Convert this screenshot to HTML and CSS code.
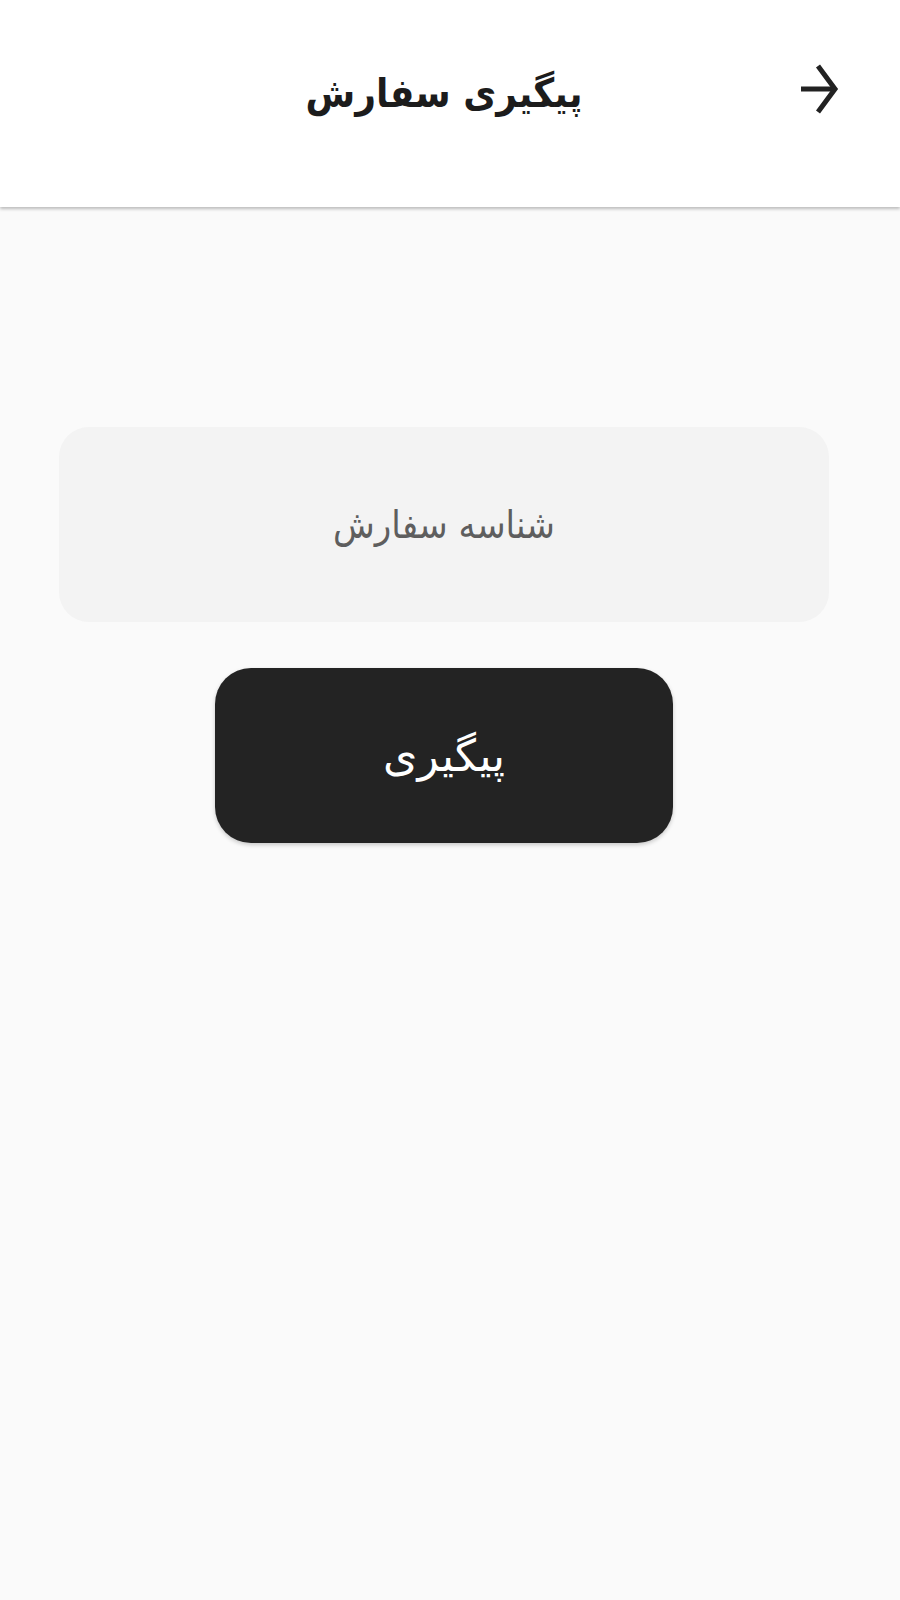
FILE: index.html
```html
<!DOCTYPE html>
<html lang="fa" dir="rtl">
<head>
    <meta charset="UTF-8">
    <meta name="viewport" content="width=device-width, initial-scale=1.0">
    <title>پیگیری سفارش</title>
    <link rel="stylesheet" href="styles.css">
</head>
<body>

    <!-- App bar -->
    <header class="app-bar">
        <button class="back-button" type="button" aria-label="بازگشت">
            <svg width="40" height="56" viewBox="0 0 40 56" fill="none" stroke="#222" stroke-width="5">
                <path d="M2 28 H36"/>
                <path d="M19 5 L36 28 L19 51"/>
            </svg>
        </button>
        <h1 class="page-title">پیگیری سفارش</h1>
        <span class="spacer"></span>
    </header>

    <!-- Tracking form -->
    <main class="track-form">
        <input type="text" class="order-input" placeholder="شناسه سفارش">
        <button type="button" class="track-button">پیگیری</button>
    </main>

</body>
</html>
```

FILE: styles.css
```css
body {
    margin: 0;
    background-color: #fafafa;
    font-family: "DejaVu Sans", "Noto Sans", sans-serif;
    min-height: 100vh;
}

.app-bar {
    height: 207px;
    background-color: #ffffff;
    box-shadow: 0 2px 3px rgba(0, 0, 0, 0.25);
    display: grid;
    grid-template-columns: 1fr auto 1fr;
    align-items: center;
    padding: 0 61px 0 49px;
    box-sizing: border-box;
}

.back-button {
    justify-self: start;
    background: none;
    border: none;
    padding: 0;
    margin-top: -30px;
    display: flex;
    cursor: pointer;
}

.page-title {
    margin: 0 0 22px 0;
    font-family: "DejaVu Sans Condensed", "DejaVu Sans", sans-serif;
    font-size: 40px;
    font-weight: bold;
    color: #1c1c1c;
}

.track-form {
    display: flex;
    flex-direction: column;
    align-items: center;
    padding: 220px 71px 0 59px;
}

.order-input {
    width: 100%;
    height: 195px;
    box-sizing: border-box;
    border: none;
    border-radius: 30px;
    background-color: #f3f3f3;
    font-family: "DejaVu Sans Condensed", "DejaVu Sans", sans-serif;
    font-size: 38px;
    text-align: center;
    color: #333;
    outline: none;
}

.order-input::placeholder {
    color: #5e5e5e;
}

.track-button {
    margin-top: 46px;
    width: 458px;
    height: 175px;
    border: none;
    border-radius: 36px;
    background-color: #232323;
    color: #ffffff;
    font-family: inherit;
    font-size: 44px;
    box-shadow: 0 2px 4px rgba(0, 0, 0, 0.2);
    cursor: pointer;
}
```
